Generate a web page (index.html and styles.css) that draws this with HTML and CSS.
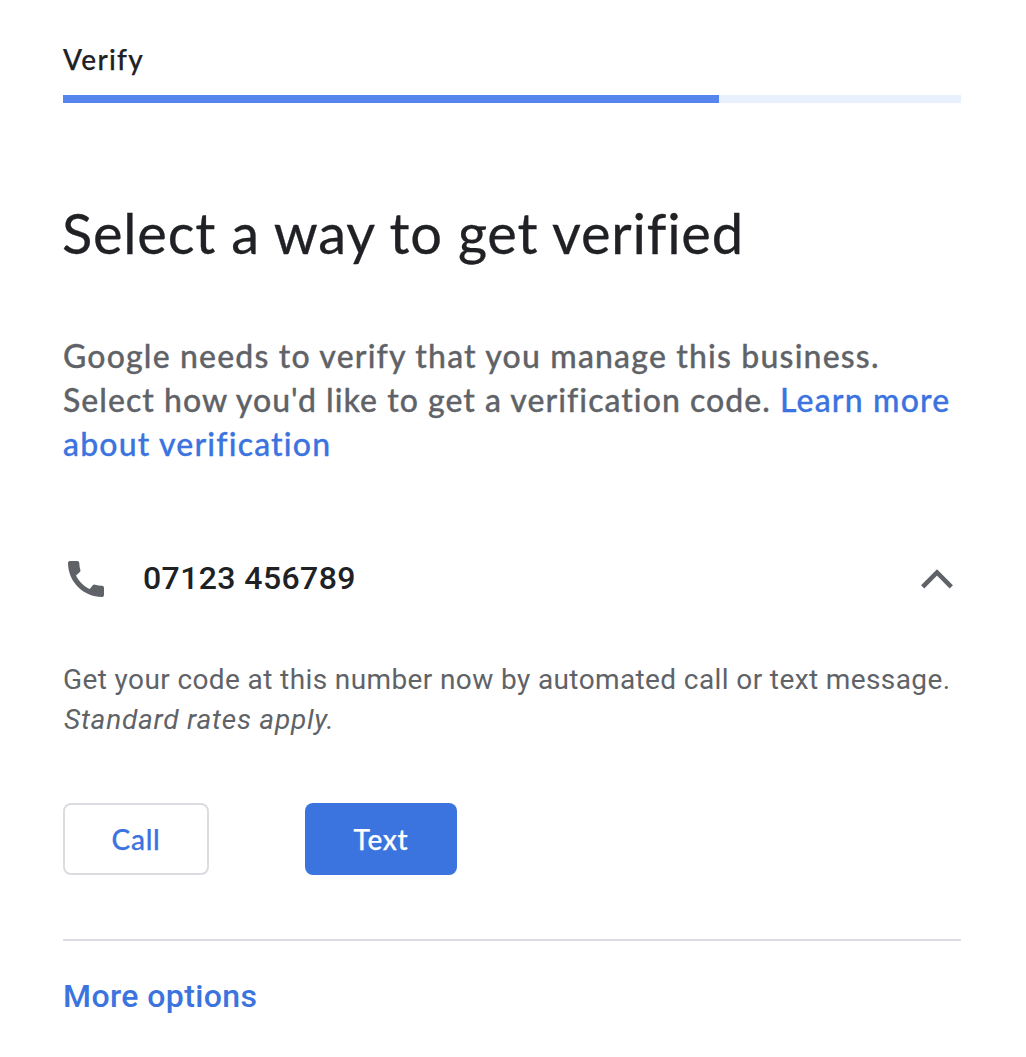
FILE: index.html
```html
<!DOCTYPE html>
<html lang="en">
<head>
<meta charset="utf-8">
<title>Verify</title>
<link rel="stylesheet" href="styles.css">
</head>
<body>
<main class="page">
  <div class="step">Verify</div>
  <div class="progress"><div class="progress-fill"></div></div>
  <h1 class="title">Select a way to get verified</h1>
  <p class="intro">Google needs to verify that you manage this business.<br><span class="line-b">Select how you'd like to get a verification code.</span> <a class="link">Learn more<br>about verification</a></p>
  <div class="phone">
    <svg class="phone-icon" viewBox="0 0 24 24"><path d="M20.01 15.38c-1.23 0-2.42-.2-3.53-.56-.35-.12-.74-.03-1.01.24l-1.57 1.97c-2.83-1.35-5.48-3.9-6.89-6.83l1.95-1.66c.27-.28.35-.67.24-1.02-.37-1.11-.56-2.3-.56-3.53 0-.54-.45-.99-.99-.99H4.19C3.65 3 3 3.24 3 3.99 3 13.28 10.73 21 20.01 21c.71 0 .99-.63.99-1.18v-3.45c0-.54-.45-.99-.99-.99z"/></svg>
    <span class="number">07123 456789</span>
    <svg class="chevron" viewBox="0 0 32 20"><path d="M1.700 17.800 16 3.400 30.300 17.800"/></svg>
  </div>
  <p class="detail">Get your code at this number now by automated call or text message.<br><em class="rates">Standard rates apply.</em></p>
  <div class="actions">
    <button class="btn btn-call">Call</button>
    <button class="btn btn-text">Text</button>
  </div>
  <hr class="rule">
  <a class="more">More options</a>
</main>
</body>
</html>
```

FILE: styles.css
```css
* { box-sizing: border-box; }
body { margin: 0; background: #fff; color: #202124; font-family: Roboto, sans-serif; }
.page { width: 898px; margin-left: 63px; padding-top: 39px; display: flex; flex-direction: column; white-space: nowrap; }
.step { height: 56px; font: 500 28px/40px Lato, sans-serif; letter-spacing: 1.3px; -webkit-text-stroke: 0.25px currentColor; }
.progress { height: 8px; background: #e8f0fe; }
.progress-fill { width: 655.5px; height: 8px; background: #5685ee; }
.title { margin: 94px 0 0 -1px; height: 72px; font: 400 56px/72px Lato, sans-serif; letter-spacing: 0.78px; -webkit-text-stroke: 0.3px currentColor; }
.intro { margin: 65px 0 0; font: 500 32px/44px Lato, sans-serif; letter-spacing: 1.17px; color: #5f6368; -webkit-text-stroke: 0.3px currentColor; }
.line-b { letter-spacing: 1.02px; }
.link, .more { color: #3b73df; }
.phone { display: flex; align-items: center; height: 48px; margin-top: 89px; }
.phone-icon { width: 48px; height: 48px; margin-left: -1px; fill: #5f6368; }
.number { margin: 0 0 2px 33px; font-weight: 500; font-size: 32px; letter-spacing: 0.4px; }
.chevron { width: 32px; height: 20px; margin: 0 8px 0 auto; fill: none; stroke: #5f6368; stroke-width: 4.600; }
.detail { margin: 57px 0 0; font-size: 28px; line-height: 40px; letter-spacing: 0.39px; color: #5f6368; }
.rates { padding-left: 1px; letter-spacing: 0.78px; }
.actions { display: flex; gap: 96px; margin-top: 63px; }
.btn { height: 72px; padding: 0; border-radius: 8px; font: 500 28px/40px Lato, sans-serif; letter-spacing: 0.7px; -webkit-text-stroke: 0.25px currentColor; }
.btn-call { width: 146px; border: 2px solid #dadce0; background: #fff; color: #3b73df; }
.btn-text { width: 152px; border: 0; background: #3b73df; color: #fff; }
.rule { width: 100%; height: 2px; margin: 64px 0 0; border: 0; background: #dadce0; }
.more { margin-top: 31px; font-weight: 500; font-size: 32px; line-height: 48px; letter-spacing: 0.4px; }
```
